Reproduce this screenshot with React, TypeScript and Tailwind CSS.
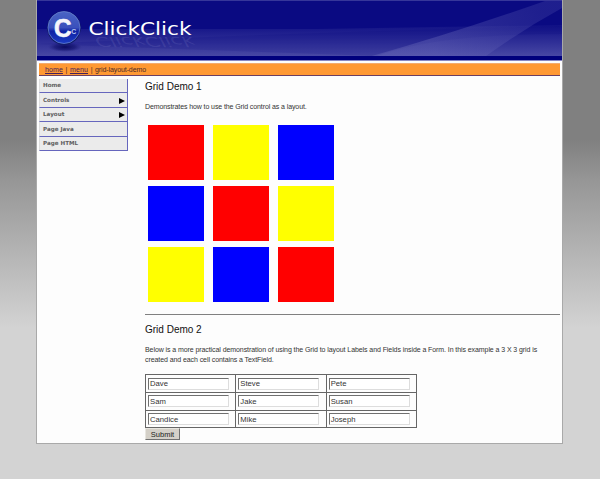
const menu = [
  { label: 'Home', sub: false },
  { label: 'Controls', sub: true },
  { label: 'Layout', sub: true },
  { label: 'Page Java', sub: false },
  { label: 'Page HTML', sub: false },
];
const squares = [
  'bg-[#ff0000]', 'bg-[#ffff00]', 'bg-[#0000ff]',
  'bg-[#0000ff]', 'bg-[#ff0000]', 'bg-[#ffff00]',
  'bg-[#ffff00]', 'bg-[#0000ff]', 'bg-[#ff0000]',
];
const names = [
  ['Dave', 'Steve', 'Pete'],
  ['Sam', 'Jake', 'Susan'],
  ['Candice', 'Mike', 'Joseph'],
];

function Banner() {
  return (
    <svg className="block h-[61px] w-full" viewBox="0 0 525 61" preserveAspectRatio="none">
      <defs>
        <linearGradient id="haze" x1="0" y1="0" x2="0" y2="1">
          <stop offset="0" stopColor="#6464b4" stopOpacity="0.08" />
          <stop offset="1" stopColor="#6464b4" stopOpacity="0.68" />
        </linearGradient>
        <linearGradient id="beam" gradientUnits="userSpaceOnUse" x1="400" y1="56" x2="500" y2="0">
          <stop offset="0" stopColor="#7474c0" stopOpacity="0.34" />
          <stop offset="1" stopColor="#4a4aa8" stopOpacity="0.32" />
        </linearGradient>
        <linearGradient id="ball" x1="0" y1="0" x2="0" y2="1">
          <stop offset="0" stopColor="#4a64c4" />
          <stop offset="0.5" stopColor="#3a50bc" />
          <stop offset="0.62" stopColor="#0f22a4" />
          <stop offset="1" stopColor="#1c3cc4" />
        </linearGradient>
        <radialGradient id="shadow">
          <stop offset="0" stopColor="#08085c" stopOpacity="0.95" />
          <stop offset="0.6" stopColor="#10106c" stopOpacity="0.6" />
          <stop offset="1" stopColor="#202080" stopOpacity="0" />
        </radialGradient>
      </defs>
      <rect width="525" height="61" fill="#0a0a82" />
      <path d="M0 29H280L525 25V56H0Z" fill="url(#haze)" />
      <path d="M0 44Q250 33 525 26V34Q400 34 340 56Z" fill="#00007a" fillOpacity="0.13" />
      <path d="M335 56Q420 32 508 1H525V8Q485 30 449 56Z" fill="url(#beam)" />
      <rect y="56" width="525" height="4" fill="#00007c" />
      <rect width="525" height="1" fill="#36369a" />
      <rect y="60" width="525" height="1" fill="#8888c4" />
      <ellipse cx="28" cy="47" rx="17" ry="5" fill="url(#shadow)" />
      <circle cx="27" cy="28" r="16.8" fill="#101c64" />
      <circle cx="27" cy="27.5" r="16" fill="url(#ball)" stroke="#6f8ad8" strokeWidth="0.7" />
      <text x="17" y="36.8" fontFamily="Liberation Sans, sans-serif" fontWeight="700" fontSize="25" textLength="17.5" lengthAdjust="spacingAndGlyphs" fill="#f5f5fb" stroke="#f5f5fb" strokeWidth="0.6">C</text>
      <text x="34.3" y="33.8" fontFamily="Liberation Sans, sans-serif" fontWeight="700" fontSize="7.5" textLength="5" lengthAdjust="spacingAndGlyphs" fill="#b4c4f0">C</text>
      <g transform="translate(57 36.5) skewX(27) scale(1 -0.75)">
        <text x="-1" y="0" fontFamily="DejaVu Sans, sans-serif" fontSize="18" textLength="99" lengthAdjust="spacingAndGlyphs" fill="#9090d0" fillOpacity="0.18">ClickClick</text>
      </g>
      <text x="51.5" y="35" fontFamily="DejaVu Sans, sans-serif" fontSize="18.5" textLength="103" lengthAdjust="spacingAndGlyphs" fill="#ffffff">ClickClick</text>
    </svg>
  );
}

export default function App() {
  return (
    <div className="h-[479px] w-[600px] overflow-hidden bg-[linear-gradient(to_bottom,#808080_0px,#808080_140px,#969696_180px,#d3d3d3_328px)] pl-9 font-['Liberation_Sans',Arial,sans-serif] text-[#333]">
      <div className="h-[444px] w-[527px] border-x border-b border-[#a9a9a9] bg-[#fdfdfd]">
        <Banner />
        <div className="mx-0.5 mt-[2px] flex h-[13px] items-center whitespace-pre border-b border-t border-b-[#6b3f62] border-t-[#f4ac70] bg-[#ff9933] pl-[6px] text-[7px] leading-none text-[#4b2a2a]">
          <span className="tracking-[0.1px] text-[#45205c] underline">home</span>
          <span className="w-[7px] text-center">|</span>
          <span className="tracking-[0.15px] text-[#45205c] underline">menu</span>
          <span className="w-[7px] text-center">|</span>
          <span className="tracking-[-0.1px]">grid-layout-demo</span>
        </div>
        <div className="flex">
          <nav className="ml-[2px] mt-[3px] w-[89px] shrink-0 font-['DejaVu_Sans',Verdana,sans-serif]">
            {menu.map((m) => (
              <div key={m.label} className="flex h-[14.4px] items-center justify-between border-b border-l border-r border-b-[#6666bd] border-l-[#dedede] border-r-[#6666bd] bg-[#ebebeb] pl-[3px] pr-[2px] pt-px text-[5.6px] font-bold leading-none text-[#606060]">
                <span>{m.label}</span>
                {m.sub && (
                  <svg className="h-[6px] w-[6px]" viewBox="0 0 6 6">
                    <path d="M0 0L6 3L0 6Z" fill="#000" />
                  </svg>
                )}
              </div>
            ))}
          </nav>
          <main className="ml-[17px] w-[415px]">
            <h2 className="mt-[5px] h-3 text-[10px] leading-3 text-[#111]">Grid Demo 1</h2>
            <p className="mt-[9px] h-[10px] text-[7px] leading-[10px] tracking-[-0.1px]">Demonstrates how to use the Grid control as a layout.</p>
            <div className="ml-[3.4px] mt-[12.7px] grid w-max grid-cols-3 gap-x-[9.5px] gap-y-[5.5px]">
              {squares.map((c, i) => (
                <div key={i} className={`size-[55.5px] ${c}`} />
              ))}
            </div>
            <div className="mt-[12.3px] h-px bg-[#808080]" />
            <h2 className="mt-[9px] h-3 text-[10px] leading-3 text-[#111]">Grid Demo 2</h2>
            <p className="mt-[9px] h-5 whitespace-nowrap text-[7px] leading-[10px] tracking-[-0.08px]">
              Below is a more practical demonstration of using the Grid to layout Labels and Fields inside a Form. In this example a 3 X 3 grid is
              <br />
              created and each cell contains a TextField.
            </p>
            <div className="mt-[9px] grid h-[54px] w-[272px] grid-cols-3 grid-rows-3 gap-px border border-[#666] bg-[#666]">
              {names.flat().map((n) => (
                <div key={n} className="flex items-center bg-[#fdfdfd] pl-[2px]">
                  <div className="flex h-3 w-[81px] items-center border border-b-[#ddd] border-l-[#707070] border-r-[#ddd] border-t-[#707070] bg-white pl-px pt-px text-[7.7px] leading-none">
                    {n}
                  </div>
                </div>
              ))}
            </div>
            <button className="flex h-3 w-[35px] items-center justify-center border border-b-[#707070] border-l-[#e8e6e0] border-r-[#707070] border-t-[#e8e6e0] bg-[#d4d0c8] text-[7.5px] leading-none text-[#222]">
              Submit
            </button>
          </main>
        </div>
      </div>
    </div>
  );
}
